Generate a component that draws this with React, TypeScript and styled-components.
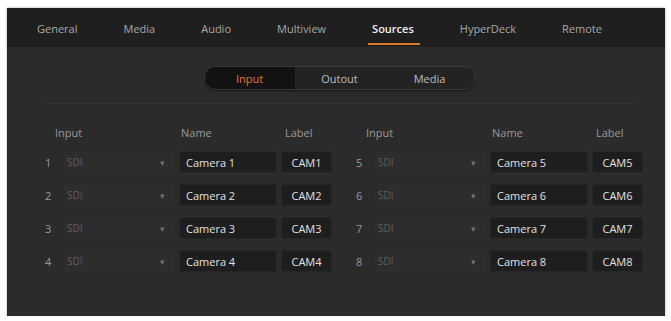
import React, { useState } from 'react';
import styled, { createGlobalStyle } from 'styled-components';

const GlobalStyle = createGlobalStyle`
  body {
    margin: 0;
    background: #fff;
    font-family: "Open Sans", "Liberation Sans", sans-serif;
  }
`;

const tabs = ['General', 'Media', 'Audio', 'Multiview', 'Sources', 'HyperDeck', 'Remote'];
const segments = ['Input', 'Outout', 'Media'];

interface Source {
    id: number;
    name: string;
    label: string;
}

const sources: Source[] = [1, 2, 3, 4, 5, 6, 7, 8].map((id) => ({
    id,
    name: `Camera ${id}`,
    label: `CAM${id}`,
}));

const SourceGroup: React.FC<{ items: Source[] }> = ({ items }) => (
    <Group>
        <HeadCell $pad={13} $span={2}>Input</HeadCell>
        <HeadCell $pad={2}>Name</HeadCell>
        <HeadCell $pad={4}>Label</HeadCell>
        {items.map((s) => (
            <React.Fragment key={s.id}>
                <RowNum>{s.id}</RowNum>
                <Select>
                    <span>SDI</span>
                    <Arrow>▾</Arrow>
                </Select>
                <Field>{s.name}</Field>
                <Field $center>{s.label}</Field>
            </React.Fragment>
        ))}
    </Group>
);

export default function App() {
    const [tab, setTab] = useState('Sources');
    const [seg, setSeg] = useState('Input');

    return (
        <>
            <GlobalStyle />
            <Panel>
                <TabBar>
                    {tabs.map((t) => (
                        <Tab key={t} $active={t === tab} onClick={() => setTab(t)}>
                            {t}
                        </Tab>
                    ))}
                </TabBar>
                <Body>
                    <Segmented>
                        {segments.map((s) => (
                            <Segment key={s} $active={s === seg} onClick={() => setSeg(s)}>
                                {s}
                            </Segment>
                        ))}
                    </Segmented>
                    <Table>
                        <SourceGroup items={sources.slice(0, 4)} />
                        <SourceGroup items={sources.slice(4)} />
                    </Table>
                </Body>
            </Panel>
        </>
    );
}

const Panel = styled.div`
  margin: 8px 0 0 7px;
  width: 658px;
  height: 308px;
  background: #2b2b2b;
  display: flex;
  flex-direction: column;
  box-shadow: 0 0 2px rgba(0, 0, 0, 0.4);
`;

const TabBar = styled.div`
  height: 39px;
  background: #1f1f1f;
  display: flex;
  align-items: stretch;
  padding-left: 30px;
  gap: 46px;
`;

const Tab = styled.div<{ $active: boolean }>`
  position: relative;
  display: flex;
  align-items: center;
  padding-top: 1px;
  font-size: 11px;
  cursor: pointer;
  color: ${(p) => (p.$active ? '#f0f0f0' : '#a8a8a8')};
  font-weight: ${(p) => (p.$active ? 600 : 400)};

  &::after {
    content: '';
    display: ${(p) => (p.$active ? 'block' : 'none')};
    position: absolute;
    left: -4px;
    right: -6px;
    bottom: 2px;
    height: 2px;
    background: #d87a2a;
  }
`;

const Body = styled.div`
  flex: 1;
  display: flex;
  flex-direction: column;
  align-items: center;
  padding-top: 19px;
`;

const Segmented = styled.div`
  display: flex;
  width: 270px;
  height: 22px;
  border-radius: 11px;
  background: #232323;
  border: 1px solid #3a3a3a;
  box-shadow: 0 1px 2px rgba(0, 0, 0, 0.5);
  overflow: hidden;
  margin-left: 7px;
`;

const Segment = styled.div<{ $active: boolean }>`
  flex: 1;
  display: flex;
  align-items: center;
  justify-content: center;
  font-size: 11px;
  cursor: pointer;
  background: ${(p) => (p.$active ? '#121212' : 'transparent')};
  color: ${(p) => (p.$active ? '#e0781e' : '#bdbdbd')};
`;

const Table = styled.div`
  margin-top: 13px;
  align-self: stretch;
  margin-left: 35px;
  margin-right: 30px;
  border-top: 1px solid #333333;
  padding-top: 21px;
  display: flex;
  gap: 21px;
`;

const Group = styled.div`
  display: grid;
  grid-template-columns: 18px 111px 98px 51px;
  grid-auto-rows: 22px;
  column-gap: 4px;
  row-gap: 11px;
  grid-template-rows: 15px;
  align-items: center;
`;

const HeadCell = styled.div<{ $pad: number; $span?: number }>`
  grid-column: span ${(p) => p.$span ?? 1};
  padding-left: ${(p) => p.$pad}px;
  font-size: 11px;
  color: #9a9a9a;
  line-height: 14px;
`;

const RowNum = styled.div`
  font-size: 11px;
  color: #9a9a9a;
  padding-left: 3px;
`;

const Select = styled.div`
  height: 22px;
  display: flex;
  align-items: center;
  justify-content: space-between;
  padding: 0 10px 0 3px;
  font-size: 10px;
  color: #5e5e5e;
  border-radius: 3px;
  background: #2d2d2d;
`;

const Arrow = styled.span`
  font-size: 9px;
  color: #707070;
`;

const Field = styled.div<{ $center?: boolean }>`
  height: 22px;
  box-sizing: border-box;
  display: flex;
  align-items: center;
  justify-content: ${(p) => (p.$center ? 'center' : 'flex-start')};
  padding: 0 6px;
  font-size: 11px;
  color: #e2e2e2;
  background: #1e1e1e;
  border: 1px solid #262626;
  border-radius: 3px;
`;
